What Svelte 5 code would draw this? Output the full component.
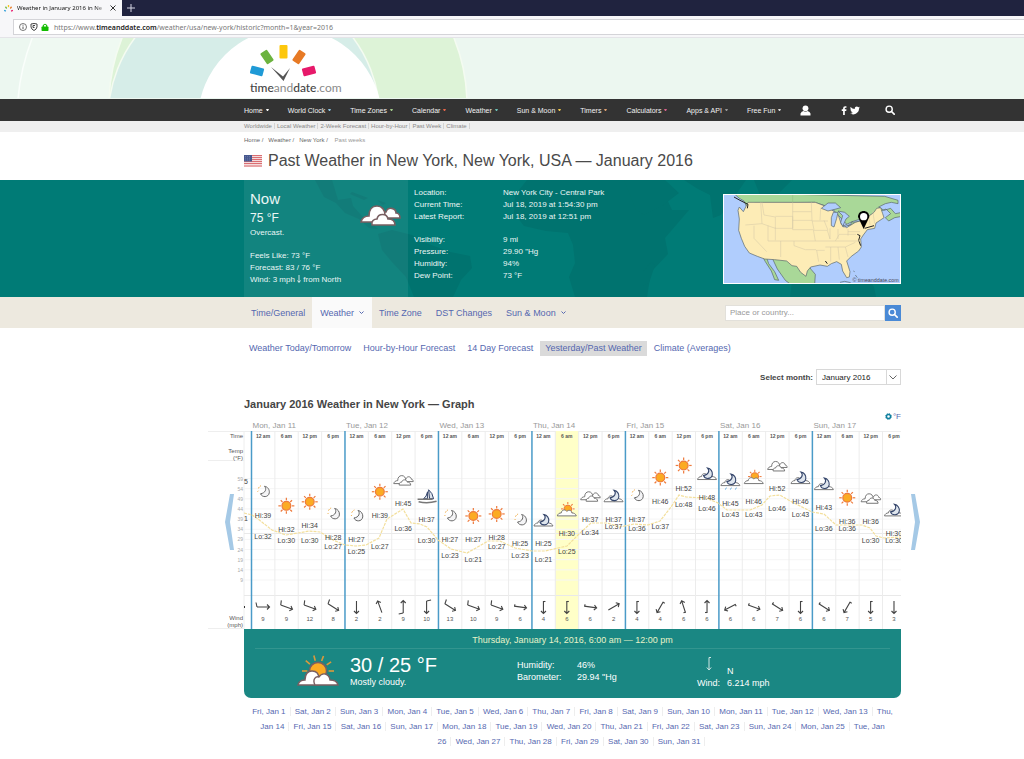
<script lang="ts">
	const menu = [
		{ name: 'Home', color: '#ffffff' },
		{ name: 'World Clock', color: '#8fc7e8' },
		{ name: 'Time Zones', color: '#a5cf8d' },
		{ name: 'Calendar', color: '#e8664a' },
		{ name: 'Weather', color: '#6cc3b8' },
		{ name: 'Sun & Moon', color: '#f2c94c' },
		{ name: 'Timers', color: '#e0a070' },
		{ name: 'Calculators', color: '#d9628c' },
		{ name: 'Apps & API', color: '#999999' },
		{ name: 'Free Fun', color: '#d8d8d8' }
	];

	const subMenu = ['Worldwide', 'Local Weather', '2-Week Forecast', 'Hour-by-Hour', 'Past Week', 'Climate'];
	const crumbs = ['Home', 'Weather', 'New York'];

	const facts = [
		['Location:', 'New York City - Central Park'],
		['Current Time:', 'Jul 18, 2019 at 1:54:30 pm'],
		['Latest Report:', 'Jul 18, 2019 at 12:51 pm'],
		['Visibility:', '9 mi'],
		['Pressure:', '29.90 "Hg'],
		['Humidity:', '94%'],
		['Dew Point:', '73 °F']
	];

	const tabs = [
		{ name: 'Time/General' },
		{ name: 'Weather', more: true, active: true },
		{ name: 'Time Zone' },
		{ name: 'DST Changes' },
		{ name: 'Sun & Moon', more: true }
	];

	const views = [
		'Weather Today/Tomorrow',
		'Hour-by-Hour Forecast',
		'14 Day Forecast',
		'Yesterday/Past Weather',
		'Climate (Averages)'
	];

	const weekdays = ['Mon', 'Tue', 'Wed', 'Thu', 'Fri', 'Sat', 'Sun'];
	const hours = ['12 am', '6 am', '12 pm', '6 pm'];

	// sky, high, low, wind speed, wind direction in degrees (0 = blowing right)
	const readings: [string, number, number, number, number][] = [
		['moon', 39, 32, 9, 0],
		['sun', 32, 30, 9, 20],
		['sun', 34, 30, 12, 20],
		['moon', 28, 27, 8, 32],
		['moon', 27, 25, 2, 90],
		['sun', 39, 27, 2, -110],
		['cloud', 45, 36, 9, -90],
		['fog', 37, 30, 10, 90],
		['moon', 27, 23, 13, 32],
		['sun', 27, 21, 10, 20],
		['sun', 28, 27, 9, 20],
		['moon', 25, 23, 6, 8],
		['night', 25, 21, 4, 90],
		['partly', 30, 25, 6, 90],
		['cloud', 37, 34, 6, 8],
		['night', 37, 37, 2, -30],
		['moon', 37, 36, 4, 90],
		['sun', 46, 37, 4, 120],
		['sun', 52, 48, 6, -108],
		['night', 48, 46, 6, -90],
		['rain', 45, 43, 6, 152],
		['partly', 46, 43, 6, 20],
		['cloud', 52, 46, 7, 32],
		['night', 46, 43, 6, 90],
		['night', 43, 36, 6, 32],
		['sun', 36, 36, 7, 120],
		['cloud', 36, 30, 5, 90],
		['night', 30, 30, 3, 90]
	];

	const step = 23.37;
	const selected = 13;
	const colX = (i: number) => 7.5 + step * i;
	const midX = (i: number) => 19 + step * i;
	const hiY = (t: number) => 177.5 - t * 2.02;
	const loY = (t: number) => 185.5 - t * 2.04;

	const scale = [59, 54, 49, 44, 39, 34, 29, 24, 19, 14, 9];
	const curve =
		'0,94 8,96 14,100 28,111 42,116 54,114 65,112 76,113 89,121 101,126 112,127 122,126 135,119 143,100 159,90 167,104 176,105 183,108 194,121 207,130 223,134 244,122 256,122 271,129 288,132 301,132 323,127 335,115 347,104 363,104 376,108 390,105 404,106 416,102 427,88 435,76 442,78 462,79 474,84 483,91 506,91 518,86 526,77 536,76 548,83 568,93 580,95 592,106 618,106 626,109 632,117 640,119 657,118';

	const days = Array.from({ length: 31 }, (_, i) => i + 1);
	const weekday = (day: number) => weekdays[(day + 3) % 7];

	let month = $state('January 2016');
	let place = $state('');
</script>

{#snippet sun()}
	<g stroke="#ee7a3c" stroke-width="1.2">
		{#each [0, 45, 90, 135, 180, 225, 270, 315] as a}
			<line x1="5.5" y1="0" x2="8" y2="0" transform="rotate({a})" />
		{/each}
		<circle r="4.4" fill="#fbab23" />
	</g>
{/snippet}

{#snippet crescent()}
	<path d="M1.5-5.5c2.500 2.500 1 7-4 7.500c1.500 4 8 4 8.800-1c.4-3-1.600-6-4.800-6.500z" />
{/snippet}

{#snippet moon()}
	<g fill="#f4f4f6" stroke="#666" stroke-width="1">{@render crescent()}</g>
	<path d="M-5-3.500l1.500-1M-5.500 0l1-1M-3-5.500l1-.5" stroke="#f0b050" stroke-width="1" />
{/snippet}

{#snippet cloud()}
	<path d="M0 2c0-2 1.500-3 3-3c1-3 5-2 5 .500c1.500 0 2 1.500 2 2.500z" />
	<path d="M-9.500 4c.5-2 2-3 4-3c0-3 1.500-5 4-5c2.500 0 4 2 4 4.500v3.500z" />
	<path d="M-4 5.500c-.5-2 1-3 2.500-3c.5-3 5-3 5.500 0c2 0 3.500 1 3.500 3z" />
{/snippet}

{#snippet singleCloud()}
	<path d="M-9.500 6c.5-2 2-3 4-3c0-3 4-4 5.500-1.500c2-2 5-1 5 1.500c2 0 4 1 4.500 3z" />
{/snippet}

{#snippet sky(kind: string)}
	{#if kind === 'sun'}
		{@render sun()}
	{:else if kind === 'moon'}
		{@render moon()}
	{:else if kind === 'cloud'}
		<g fill="#fff" stroke="#777" stroke-width="1">{@render cloud()}</g>
	{:else if kind === 'partly'}
		<g transform="translate(1 -1) scale(.85)">{@render sun()}</g>
		<g fill="#fff" stroke="#777" stroke-width="1">{@render singleCloud()}</g>
	{:else if kind === 'fog'}
		<path d="M2-6l1 9h4q-1-6-5-9zM1-4v7h-4q3-2 4-7z" fill="#dfe6ee" stroke="#34456b" stroke-width="1" />
		<path d="M-9 3.500h15M-8 6q9 2 18-.5" stroke="#777" stroke-width="1.500" />
	{:else}
		<g fill="#fff" stroke="#777" stroke-width="1">{@render singleCloud()}</g>
		<g fill="#dfe6ee" stroke="#34456b" stroke-width="1.100" transform="translate(-1 0)">{@render crescent()}</g>
		{#if kind === 'rain'}
			<path d="M-4 8l-1 2M1 8l-1 2M6 8l-1 2" stroke="#6aaede" stroke-width="1" />
		{/if}
	{/if}
{/snippet}

{#snippet magnifier()}
	<svg viewBox="0 0 12 12" width="10" height="10" aria-hidden="true">
		<circle cx="5" cy="5" r="3.700" fill="none" stroke="currentColor" stroke-width="1.700" />
		<path d="M7.800 7.800l3.200 3.200" stroke="currentColor" stroke-width="2" stroke-linecap="round" />
	</svg>
{/snippet}

<div class="browser">
	<div class="tab-strip">
		<div class="browser-tab">
			<svg viewBox="0 0 10 8" width="9" height="7" aria-hidden="true">
				<path d="M0 6l2 1" stroke="#35a0d8" stroke-width="1.500" />
				<path d="M1.500 2l1.500 2" stroke="#76b843" stroke-width="1.500" />
				<path d="M5 0v2.500" stroke="#f6c416" stroke-width="1.500" />
				<path d="M8.500 2l-1.500 2" stroke="#e87b28" stroke-width="1.500" />
				<path d="M10 6l-2 1" stroke="#e8196b" stroke-width="1.500" />
			</svg>
			<span class="tab-title">Weather in January 2016 in Ne</span>
			<button type="button" aria-label="Close tab">
				<svg viewBox="0 0 6 6" width="6" height="6"><path d="M.5.5l5 5M5.500.5l-5 5" stroke="#333" /></svg>
			</button>
		</div>
		<button type="button" class="new-tab" aria-label="New tab">
			<svg viewBox="0 0 8 8" width="8" height="8"><path d="M4 0v8M0 4h8" stroke="#d6d7e4" /></svg>
		</button>
	</div>
	<div class="url-bar">
		<div class="url-box">
			<svg viewBox="0 0 8 8" width="8" height="8" aria-hidden="true">
				<circle cx="4" cy="4" r="3.500" fill="none" stroke="#555" stroke-width=".8" />
				<path d="M4 3.500v2.500M4 1.800v.9" stroke="#555" />
			</svg>
			<svg viewBox="0 0 8 8" width="8" height="8" aria-hidden="true">
				<path d="M1 1q3-1 6 0v3q-.5 2.500-3 3.500q-2.500-1-3-3.500z" fill="none" stroke="#444" />
				<path d="M3 2.500h2M3 2.500v2h1.500" stroke="#444" fill="none" />
			</svg>
			<svg viewBox="0 0 8 8" width="8" height="8" aria-hidden="true">
				<rect x=".5" y="3.500" width="7" height="4.500" rx=".8" fill="#12bc00" />
				<path d="M2.300 4v-1.500q1.700-2.500 3.400 0v1.500" fill="none" stroke="#12bc00" stroke-width="1.200" />
			</svg>
			<span class="url">https://www.<b>timeanddate.com</b>/weather/usa/new-york/historic?month=1&amp;year=2016</span>
		</div>
	</div>
</div>

<header>
	<div class="banner">
		<svg class="rings" viewBox="0 0 480 60" width="480" height="60" aria-hidden="true">
			<circle cx="246" cy="82" r="229" fill="#eff9f2" stroke="#fafefb" stroke-width="1.500" />
			<rect x="380" width="100" height="60" fill="#ecf7f0" />
			<circle cx="288" cy="67" r="179" fill="#ddf3d7" stroke="#f4fbf1" stroke-width="1.500" />
			<circle cx="244" cy="81" r="136" fill="#d6ede8" stroke="#f4fbf1" stroke-width="1.500" />
			<circle cx="290" cy="82" r="92" fill="#fff" />
		</svg>
		<a href="#home" class="logo">
			<svg viewBox="0 0 94 36" width="94" height="36" aria-hidden="true">
				<rect x="-6.500" y="-4" width="13" height="8" rx="1" fill="#1f9ad6" transform="translate(7 26) rotate(15)" />
				<rect x="-6.500" y="-4" width="13" height="8" rx="1" fill="#6cb33f" transform="translate(17 12) rotate(56)" />
				<rect x="29.500" y="0" width="8" height="13.500" rx="1" fill="#fdc70c" />
				<rect x="-6.500" y="-4" width="13" height="8" rx="1" fill="#e77a25" transform="translate(49 12) rotate(-56)" />
				<rect x="-6.500" y="-4" width="13" height="8" rx="1" fill="#e7196a" transform="translate(59 26) rotate(-15)" />
				<path d="M21 22l12 9.500l7-8.500l-6.500 13z" fill="#555" />
			</svg>
			<span><b>time</b>and<b>date</b>.com</span>
		</a>
	</div>

	<nav class="menu">
		<div class="wrap">
			{#each menu as item}
				<a href="#{item.name}">{item.name}<i style:border-top-color={item.color}></i></a>
			{/each}
			<a href="#account" aria-label="My account">
				<svg viewBox="0 0 11 11" width="11" height="11">
					<circle cx="5.500" cy="3.300" r="2.900" fill="#fff" />
					<path d="M.5 10.500v-2q1-2.500 3-2.500q2 1.500 4 0q2.500.5 3 2.500v2z" fill="#fff" />
				</svg>
			</a>
			<span class="social">
				<a href="#facebook" aria-label="Facebook">
					<svg viewBox="0 0 6 10" width="6" height="9">
						<path d="M2 10v-4.500h-1.500v-1.800h1.500v-1.200q0-2.300 2.300-2.300h1.400v1.800h-1q-.8 0-.8.8v.9h1.800l-.2 1.800h-1.600v4.500z" fill="#fff" />
					</svg>
				</a>
				<a href="#twitter" aria-label="Twitter">
					<svg viewBox="0 0 12 10" width="10" height="9">
						<path d="M12 1.500l-1.200 1.200c.2 4.500-3.800 7-7 7q-2.200 0-3.800-1q2 .1 3.500-1q-1.800-.2-2.200-1.600h1q-1.800-.7-1.900-2.500l1 .3q-1.500-1.500-.7-3.200q2 2.400 5 2.500c-.3-3.200 3-3.700 4.200-2.200l1.600-.6l-.9 1.300z" fill="#fff" />
					</svg>
				</a>
			</span>
			<button type="button" class="search" aria-label="Search">{@render magnifier()}</button>
		</div>
	</nav>

	<nav class="sub-menu">
		<div class="wrap">
			{#each subMenu as item}<a href="#{item}">{item}</a>{/each}
		</div>
	</nav>
</header>

<main>
	<div class="wrap">
		<div class="crumbs">
			{#each crumbs as crumb}<a href="#{crumb}">{crumb} /</a>{/each}
			<span>Past weeks</span>
		</div>
		<h1>
			<svg viewBox="0 0 18 12" width="18" height="12" aria-hidden="true">
				<rect width="18" height="12" fill="#f4dadb" />
				<path d="M0 .5h18M0 2.500h18M0 4.500h18M0 6.500h18M0 8.500h18M0 11h18" stroke="#db6e72" />
				<rect width="8" height="6.500" fill="#46588f" />
				<path d="M1 1.500h6M1 3.200h6M1 5h6" stroke="#7583ad" stroke-width=".7" stroke-dasharray="1 1" />
			</svg>
			Past Weather in New York, New York, USA — January 2016
		</h1>
	</div>

	<section class="current">
		<svg class="world" viewBox="0 0 1024 117" preserveAspectRatio="xMinYMin slice" aria-hidden="true">
			<path d="M315 0l9 17l12 6l9 10l14 6l10 9l9 1l-7-6l-10-8l-8-9l-2-8l-13 2l-6-20z" />
			<path d="M352 12l16 6l-4 2l-14-6zM377 20l9 3l-3 2z" />
			<path d="M378 54l14-4l20 5l14 8l24 9l20 4l2 12l-11 12l-8 17h-39l-8-20l-14-15l-10-12z" />
			<path d="M527 0l-12 15l-1 18l10 13l22 5l22 2l5 12l2 18l-6 14l6 20h72l4-25l17-18l-3-16l24-28h-17l-14-30z" />
			<path d="M624 0l12 30l8 5l18-9l17-13l-14-13zM684 0l14 9l12 6l3 23l8-3l16-22l9-13zM754 0l8 20l12 24l6-6l-2-24l14-14zM643 92l8-10l4 3l-6 18l-6 3zM790 117l2-16l18-9l18-5l14 4l18-4l14 20l2 10z" />
		</svg>
		<div class="wrap current-inner">
			<div class="now">
				<div>
					<h2>Now</h2>
					<p class="degrees">75 °F</p>
					<p>Overcast.</p>
				</div>
				<svg viewBox="-11 -6 22 13" width="44" height="26" aria-label="Overcast">
					<g fill="#fff" stroke="#795f62" stroke-width=".8">{@render cloud()}</g>
				</svg>
				<div class="feels">
					<p>Feels Like: 73 °F</p>
					<p>Forecast: 83 / 76 °F</p>
					<p>Wind: 3 mph
						<svg viewBox="0 0 4 8" width="4" height="8" aria-hidden="true"><path d="M2 0v7M.5 5.500l1.500 2l1.500-2" stroke="#fff" fill="none" stroke-width=".8" /></svg>
						from North</p>
				</div>
			</div>
			<table class="facts">
				<tbody>
					{#each facts as [label, value], i}
						<tr class:spaced={i === 3}>
							<th scope="row">{label}</th>
							<td>{value}</td>
						</tr>
					{/each}
				</tbody>
			</table>
			<a href="#map" class="map" aria-label="Location of New York">
				<svg viewBox="312 58 528 264" width="176" height="88">
					<rect x="312" y="58" width="528" height="264" fill="#b0cdfd" />
					<g stroke="#56646a" stroke-width="2">
						<path fill="#a9d898" d="M340 52l18 16l14 8l12 26l20-20l180-2l50 16l50 54l40-12l34-24l20-6l20-8l14 14l-16 12l10 10l18-10l22-4v-12l-20 4l-14-16l-20 6l-16-10l20-10l18-4l20 4v-10l-40-12z" />
						<path fill="#a9d898" d="M422 232l14 26l18 28l10 26l12 2l-12-26l-18-24l-8-24l20 10l14 30l24 34l16 12h72l2-30l-12-14l-22-30l-40-24l-50-4z" />
						<path fill="#fdecb6" d="M384 80h202l26 10l22 12l20 14l10 30l16 10l26-16l26-8l30-22l8-12l12-2l6 18l4 12l-24 16l-4 16l-22 4l-12 16l-8 12l2 24l-8 12l-22 16l-14 14l10 32l-2 16l-8 2l-12-20l-4-20l-14-8l-16 6l-12 8l-22-4l-28 6l-10 12l-4 16l-16-12l-12-18l-14-2l-16-14l-36-4l-30-2l-22-8l-24-10l-14-20l-10-24l-8-24l2-34l-4-26l4-10l12 14z" />
						<path fill="#b0cdfd" d="M604 98l20-16h22l16 14l-14 4l-24 6zM640 110l-6 16v24l8 4l8-26l4-18zM654 106l20 4l14 12l-10 8l-10 22l-6-12l6-20zM668 152l28-14l-4 8l-20 8zM696 138l26-8l-2 6l-20 4z" />
						<path d="M712 176l8 4l-4 14l6 16M734 158l28-8M616 256l6 8M342 64l18 10l24 12l-2 12" fill="none" stroke="#222" stroke-width="3" />
						<path d="M700 286l4 2M706 298l6 8M660 320l14-3l18 4" fill="none" />
					</g>
					<path d="M422 80l4 64l-50 4M402 150v38l38 40M426 144l40 14v-34l-34-6l-6-38M466 156v38M466 122h52v36h-52M444 150v46h78M482 196v48M518 80v82M518 108h56M518 134h58l6 28M518 162h62l6 34h-64M522 196v14l34 12h32M574 80l2 54M576 136h48M582 164h40l8 26M586 196h60l12-20h50M588 224h26M616 214h60l30-14M590 224l6 34M612 134l12 30M630 158v32M654 160v30M632 214v44M654 214l4 38M676 214l8 30M646 196h76M684 160v20M684 168h36M746 110l4 38M758 104l6 40M602 96l-2 38" fill="none" stroke="#d3c7a6" stroke-width="1.500" />
					<path d="M518 58v22" stroke="#94bd83" stroke-width="1.500" />
					<path d="M714 124c0-24 34-24 34 0l-17 36z" fill="#000" />
					<circle cx="731" cy="123" r="11" fill="#fff" />
					<text x="836" y="318" text-anchor="end">© timeanddate.com</text>
				</svg>
			</a>
		</div>
	</section>

	<nav class="tabs">
		<div class="wrap">
			{#each tabs as tab}
				<a href="#{tab.name}" class:active={tab.active}>
					{tab.name}
					{#if tab.more}
						<svg viewBox="0 0 5 3" width="5" height="3" aria-hidden="true"><path d="M.5.5l2 2l2-2" fill="none" stroke="#5568b0" /></svg>
					{/if}
				</a>
			{/each}
			<form onsubmit={(e) => e.preventDefault()}>
				<input type="text" aria-label="Place or country" placeholder="Place or country..." bind:value={place} />
				<button type="submit" aria-label="Search place">{@render magnifier()}</button>
			</form>
		</div>
	</nav>

	<div class="wrap">
		<nav class="views">
			{#each views as view, i}
				<a href="#{view}" class:active={i === 3}>{view}</a>
			{/each}
		</nav>

		<div class="month">
			<label for="month">Select month:</label>
			<span class="select">
				<select id="month" bind:value={month}>
					<option>January 2016</option>
					<option>February 2016</option>
				</select>
				<svg viewBox="0 0 8 5" width="8" height="5" aria-hidden="true"><path d="M.5.5l3.500 3.500l3.500-3.500" fill="none" stroke="#666" /></svg>
			</span>
		</div>

		<h2 class="graph-title">January 2016 Weather in New York — Graph</h2>

		<div class="graph">
			<svg viewBox="-36 0 720 210" class="plot">
				<defs>
					<clipPath id="plot-area"><rect x="0" y="0" width="657" height="210" /></clipPath>
				</defs>
				<path d="M-36 12.500h693M-36 41.500h36M-36 209.500h36M0 12v198" stroke="#eeeeee" />
				<g class="axis">
					<text class="strong" x="-1" y="19">Time</text>
					<text class="strong" x="-1" y="34">Temp</text>
					<text class="strong" x="-1" y="41">(°F)</text>
					{#each scale as t, i}
						<text x="-1" y={61.500 + i * 10.150}>{t}</text>
					{/each}
					<text class="strong" x="-1" y="201">Wind</text>
					<text class="strong" x="-1" y="208">(mph)</text>
				</g>
				<g clip-path="url(#plot-area)">
					<rect x={colX(selected)} y="12" width={step} height="198" fill="#ffffc8" />
					{#each scale as _, i}
						<line x1="0" x2="657" y1={59.500 + i * 10.150} y2={59.500 + i * 10.150} stroke="#f5f5f5" />
					{/each}
					<path d="M0 114.500h657M0 176.500h657" stroke="#e9e9e9" />
					{#each readings as _, i}
						<line
							x1={colX(i)}
							x2={colX(i)}
							y1="12"
							y2="210"
							stroke={i % 4 ? '#ececec' : '#4a9bc8'}
							stroke-width={i % 4 ? 1 : 1.500}
						/>
					{/each}
					<polyline points={curve} fill="none" stroke="#f3df9c" stroke-width="1.200" stroke-dasharray="3 1" />
					<text class="temp" x="0" y="65">5</text>
					<text class="temp" x="0" y="102">1</text>
					<path d="M-6 188h7M-1 186l2 2l-2 2" stroke="#333" fill="none" />
					{#each readings as [kind, hi, lo, speed, dir], i}
						<text class="hour" x={midX(i)} y="19">{hours[i % 4]}</text>
						<g transform="translate({midX(i)} {hiY(hi) - 26})" fill="none">{@render sky(kind)}</g>
						<text class="temp mid" x={midX(i)} y={hiY(hi)}>Hi:{hi}</text>
						<text class="temp mid" x={midX(i)} y={loY(lo)}>Lo:{lo}</text>
						<g transform="translate({midX(i)} 188) rotate({dir})" fill="none" stroke="#444" stroke-width="1.100">
							<path d="M-6 0h12.500M4-2.500l2.500 2.500l-2.500 2.500" />
							{#if speed > 7}
								<path d="M-6 0l-1-4.500" />
							{:else if speed > 3}
								<path d="M-5.500 0v-2" />
							{/if}
						</g>
						<text class="speed" x={midX(i)} y="202">{speed}</text>
					{/each}
				</g>
				{#each weekdays as day, i}
					<text class="day" x={colX(i * 4) + 1} y="9">{day}, Jan {i + 11}</text>
				{/each}
			</svg>
			<button type="button" class="unit" aria-label="Change units">
				<svg viewBox="0 0 8 8" width="7" height="7" aria-hidden="true"><circle cx="4" cy="4" r="2.300" fill="none" stroke="#0f7f9f" stroke-width="1.600" /><circle cx="4" cy="4" r="3.400" fill="none" stroke="#0f7f9f" stroke-dasharray="1.400 1.270" /></svg>°F
			</button>
			<button type="button" class="scroll prev" aria-label="Earlier">
				<svg viewBox="0 0 10 56" width="10" height="56"><path d="M5 0h4l-4 28l4 28h-4l-5-28z" fill="#a5c9e6" /></svg>
			</button>
			<button type="button" class="scroll next" aria-label="Later">
				<svg viewBox="0 0 10 56" width="10" height="56"><path d="M5 0h-4l4 28l-4 28h4l5-28z" fill="#a5c9e6" /></svg>
			</button>
		</div>

		<section class="detail">
			<h3>Thursday, January 14, 2016, 6:00 am — 12:00 pm</h3>
			<div class="detail-row">
				<svg viewBox="-11 -10 22 16" width="44" height="32" aria-label="Mostly cloudy">
					<g transform="translate(0 -2)" stroke="#d99a3c" stroke-width=".8">
						{#each [0, -35, -70, -105, -140, 180] as a}
							<line x1="5.300" y1="0" x2="8" y2="0" transform="rotate({a})" />
						{/each}
						<circle r="4.300" fill="#fbab23" stroke="#795f62" />
					</g>
					<g fill="#fff" stroke="#795f62" stroke-width=".7">
						<path d="M-10 5c.5-2 2-2.500 3.500-2.500c0-3 1.500-4.500 3.500-4.500c2.500 0 3.500 1.500 3.500 4v3z" />
						<path d="M-1.500 5c-1.500-3 .5-4.500 2-4c1.500-2.500 5-2 5.500 1.500c2 0 3.500 .500 4 2.500z" />
					</g>
				</svg>
				<div>
					<p class="big">30 / 25 °F</p>
					<p>Mostly cloudy.</p>
				</div>
				<dl>
					<dt>Humidity:</dt>
					<dd>46%</dd>
					<dt>Barometer:</dt>
					<dd>29.94 "Hg</dd>
				</dl>
				<dl class="wind">
					<dt>
						<svg viewBox="0 0 6 14" width="6" height="14" aria-hidden="true"><path d="M3 .5v12M.8 10.500l2.200 2.500l2.200-2.500M3 .5h2" fill="none" stroke="#cfe6e4" /></svg>
						Wind:
					</dt>
					<dd>N<br />6.214 mph</dd>
				</dl>
			</div>
		</section>

		<p class="days">
			{#each days as day}
				<a href="#day-{day}">{weekday(day)}, Jan {#if day === 26}<br />{/if}{day}</a>{' '}
			{/each}
		</p>
	</div>
</main>

<style>
	:global(body) {
		background: #fff;
		color: #454545;
		font-family: 'Liberation Sans', Arial, sans-serif;
		font-size: 9px;
	}

	a {
		color: inherit;
		text-decoration: none;
	}

	h1,
	h2,
	h3,
	p,
	dl,
	dd {
		margin: 0;
		font-weight: normal;
	}

	svg {
		flex: none;
	}

	button {
		display: flex;
		align-items: center;
		justify-content: center;
		padding: 0;
		border: 0;
		background: none;
		cursor: pointer;
	}

	.wrap {
		margin: 0 123px 0 244px;
	}

	/* browser */
	.browser {
		font-family: 'Noto Sans', 'Open Sans', sans-serif;
		font-size: 6px;
	}

	.tab-strip {
		display: flex;
		height: 16px;
		background: #20233f;
	}

	.browser-tab {
		display: flex;
		align-items: center;
		gap: 4px;
		width: 112px;
		padding: 0 6px 0 4px;
		background: #f7f7f9;
	}

	.tab-title {
		flex: 1;
		white-space: nowrap;
		color: #111;
		mask-image: linear-gradient(to right, #000 88%, transparent);
	}

	.new-tab {
		width: 18px;
		height: 15px;
	}

	.url-bar {
		height: 22px;
		box-sizing: border-box;
		padding: 3px 0 3px 13px;
		background: #f7f7f9;
		border-bottom: 1px solid #e4e4e8;
	}

	.url-box {
		display: flex;
		align-items: center;
		gap: 3px;
		height: 14px;
		padding-left: 5px;
		background: #fff;
		border: 1px solid #d4d4d8;
		border-right: 0;
	}

	.url {
		margin-left: 2px;
		color: #777;
		font-size: 7px;
	}

	.url b {
		color: #222;
		font-weight: 600;
	}

	/* banner */
	.banner {
		position: relative;
		height: 61px;
		background: #ecf7f0;
		overflow: hidden;
	}

	.rings {
		position: absolute;
		left: 0;
		top: 0;
	}

	.logo {
		position: relative;
		display: block;
		width: 94px;
		margin-left: 250px;
		padding-top: 7px;
		font-family: Lato, sans-serif;
		font-size: 12px;
		line-height: 14px;
		color: #8a8a8a;
	}

	.logo svg {
		display: block;
	}

	.logo b {
		color: #444;
		font-weight: 500;
	}

	/* menus */
	.menu {
		background: #333;
		color: #f2f2f2;
		font-size: 7px;
	}

	.menu .wrap {
		display: flex;
		align-items: center;
		gap: 19px;
		height: 22px;
	}

	.menu a {
		display: flex;
		align-items: center;
		gap: 3px;
		white-space: nowrap;
	}

	.menu i {
		border: 1px solid transparent;
		border-top: 2px solid;
		border-bottom: 0;
		width: 1px;
	}

	.social {
		display: flex;
		gap: 3px;
		margin-left: 11px;
	}

	.search {
		margin-left: 6px;
		color: #fff;
	}

	.sub-menu {
		background: #efefef;
		color: #888;
		font-size: 6px;
		line-height: 11px;
	}

	.sub-menu a {
		margin-right: 2px;
		padding-right: 2px;
		border-right: 1px solid #d4d4d4;
	}

	.crumbs {
		padding-top: 3px;
		font-size: 6px;
		line-height: 10px;
		color: #666;
	}

	.crumbs a {
		margin-right: 5px;
	}

	.crumbs span {
		color: #999;
	}

	h1 {
		display: flex;
		align-items: center;
		gap: 6px;
		padding: 5px 0 9px;
		font-size: 16px;
		line-height: 21px;
		color: #4a4a4a;
	}

	/* current weather */
	.current {
		position: relative;
		background: #007b76;
		color: #eaf6f5;
		font-size: 8px;
		overflow: hidden;
	}

	.world {
		position: absolute;
		width: 100%;
		height: 117px;
		fill: #00736f;
	}

	.current-inner {
		position: relative;
		display: flex;
		height: 117px;
	}

	.now {
		display: grid;
		grid-template-columns: 1fr auto;
		align-content: start;
		width: 152px;
		padding: 8px 6px 0;
		background: rgba(255, 255, 255, 0.07);
		line-height: 12px;
	}

	.now > svg {
		margin-top: 14px;
	}

	.now h2 {
		font-size: 15px;
		line-height: 21px;
	}

	.now .degrees {
		font-size: 12px;
		line-height: 18px;
	}

	.feels {
		grid-column: 1 / -1;
		padding-top: 11px;
	}

	.feels svg {
		vertical-align: -1px;
	}

	.facts {
		align-self: flex-start;
		margin: 7px 0 0 6px;
		border-collapse: collapse;
		line-height: 12px;
	}

	.facts th {
		width: 89px;
		padding: 0;
		font-weight: normal;
		text-align: left;
	}

	.facts td {
		padding: 0;
	}

	.facts .spaced > * {
		padding-top: 11px;
	}

	.map {
		align-self: flex-start;
		margin: 14px 0 0 auto;
		border: 1px solid #fff;
	}

	.map svg {
		display: block;
	}

	.map text {
		font-size: 16px;
		fill: #445;
	}

	/* tabs */
	.tabs {
		background: #ede9df;
		color: #5568b0;
	}

	.tabs .wrap {
		display: flex;
		height: 31px;
	}

	.tabs a {
		display: flex;
		align-items: center;
		gap: 5px;
		padding: 0 7px;
	}

	.tabs a.active {
		padding: 0 8px;
		background: #fafafa;
	}

	.tabs form {
		display: flex;
		align-self: center;
		margin-left: auto;
	}

	.tabs input {
		box-sizing: border-box;
		width: 160px;
		height: 16px;
		padding: 0 4px;
		border: 1px solid #e2e0da;
		font: 8px 'Liberation Sans', Arial, sans-serif;
	}

	.tabs input::placeholder {
		color: #999;
	}

	.tabs form button {
		width: 16px;
		height: 16px;
		background: #4a8ad6;
		color: #fff;
	}

	.views {
		display: flex;
		gap: 2px;
		padding: 13px 0;
		color: #5568b0;
		line-height: 15px;
	}

	.views a {
		padding: 0 5px;
		white-space: nowrap;
	}

	.views .active {
		background: #dadada;
	}

	.month {
		display: flex;
		justify-content: flex-end;
		align-items: center;
		gap: 3px;
		font-size: 8px;
	}

	.month label {
		font-weight: bold;
	}

	.select {
		position: relative;
		border: 1px solid #d8d8d8;
	}

	.select select {
		display: block;
		width: 83px;
		height: 14px;
		padding: 0 5px;
		appearance: none;
		border: 0;
		background: linear-gradient(#d8d8d8, #d8d8d8) 69px 0 / 1px 100% no-repeat;
		color: #222;
		font: 8px 'Liberation Sans', Arial, sans-serif;
	}

	.select svg {
		position: absolute;
		right: 3px;
		top: 5px;
		pointer-events: none;
	}

	.graph-title {
		padding: 12px 0 8px;
		font-size: 11px;
		line-height: 14px;
		font-weight: bold;
	}

	/* graph */
	.graph {
		position: relative;
		margin: 0 -27px 0 -36px;
	}

	.plot {
		display: block;
		width: 100%;
	}

	.axis text {
		fill: #aaa;
		font-size: 5px;
		text-anchor: end;
	}

	.axis .strong {
		fill: #555;
		font-size: 6px;
	}

	.temp {
		fill: #444;
		font-size: 7px;
	}

	.mid,
	.hour,
	.speed {
		text-anchor: middle;
	}

	.hour {
		fill: #555;
		font-size: 5px;
		font-weight: bold;
	}

	.speed {
		fill: #555;
		font-size: 6px;
	}

	.day {
		fill: #999;
		font-size: 8px;
	}

	.unit {
		position: absolute;
		top: -7px;
		right: 27px;
		gap: 1px;
		color: #5568b0;
		font: 8px 'Liberation Sans', Arial, sans-serif;
	}

	.scroll {
		position: absolute;
		top: 75px;
	}

	.prev {
		left: 17px;
	}

	.next {
		right: 8px;
	}

	/* selected period */
	.detail {
		padding: 5px 11px 0;
		background: #1a8783;
		border-radius: 0 0 7px 7px;
		color: #fff;
		line-height: 12px;
	}

	.detail h3 {
		padding-bottom: 1px;
		border-bottom: 1px solid #33958f;
		color: #e8f3c8;
		font-size: 9px;
		line-height: 13px;
		text-align: center;
	}

	.detail-row {
		display: flex;
		align-items: flex-start;
		height: 49px;
		padding: 0 41px;
	}

	.detail-row > svg {
		margin: 6px 10px 0 0;
	}

	.detail-row > div {
		width: 167px;
		padding-top: 5px;
	}

	.big {
		font-size: 20px;
		line-height: 22px;
	}

	dl {
		display: grid;
		grid-template-columns: 60px 120px;
		padding-top: 10px;
	}

	.wind {
		grid-template-columns: auto auto;
		align-items: end;
		gap: 7px;
		padding-top: 8px;
	}

	.wind svg {
		display: block;
		margin: 0 auto 6px;
	}

	.days {
		padding: 6px 6px 10px;
		color: #5568b0;
		font-size: 8px;
		line-height: 15px;
		text-align: center;
	}

	.days a {
		margin-right: 2px;
		padding-right: 4px;
		border-right: 1px solid #eee;
	}
</style>
